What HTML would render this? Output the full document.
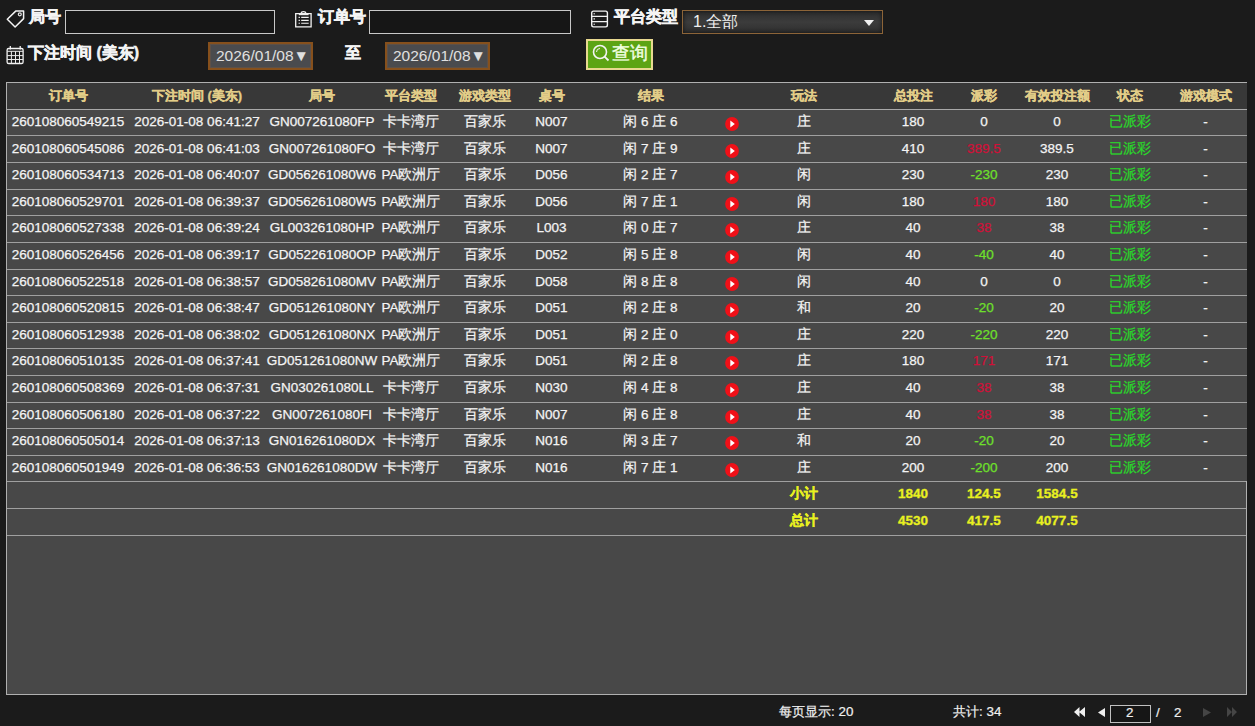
<!DOCTYPE html>
<html><head><meta charset="utf-8">
<style>
*{margin:0;padding:0;box-sizing:border-box}
html,body{width:1255px;height:726px;overflow:hidden;background:#1b1b1b;font-family:"Liberation Sans",sans-serif;color:#f0f0f0}
.a{position:absolute}
.lbl{position:absolute;font-weight:bold;font-size:16px;color:#f4f4f4;white-space:nowrap;line-height:16px;-webkit-text-stroke:0.5px #f4f4f4}
.inp{position:absolute;border:1px solid #c8c8c8;background:#161616}
.dt{position:absolute;border:2px solid #86501c;background:#4a4b4e;box-shadow:inset 0 0 0 1px #5c5048;color:#e0e0e0;font-size:15.5px;line-height:24px;white-space:nowrap}
.tbl{position:absolute;left:6px;top:82px;width:1241px;height:613px;background:#484848;border:1px solid #b0b0b0;border-right:none}
.rb{position:absolute;left:1246px;top:481px;width:1px;height:214px;background:#b0b0b0}
.hd{position:absolute;left:0;top:0;width:1240px;height:27px;background:#383838;border-bottom:1px solid #a8a8a8}
.hd .c{color:#e2cd88;font-weight:bold;font-size:13px;line-height:25px;-webkit-text-stroke:0.3px #e2cd88}
.rw{position:absolute;left:0;width:1240px;height:26.6px;border-bottom:1px solid #a0a0a0}
.c{position:absolute;top:0;width:140px;text-align:center;white-space:nowrap;font-size:13.5px;line-height:24px;color:#f4f4f4;-webkit-text-stroke:0.25px currentColor}
.ic{position:absolute;top:6px;width:16px;height:16px}
.ic svg{display:block}
.red{color:#d01038}
.grn{color:#6ee02a}
.st{color:#2ad82a}
.sm .c{color:#e8f020;font-weight:bold;-webkit-text-stroke:0.3px #e8f020}
.pg{position:absolute;font-size:13.4px;color:#f0f0f0;white-space:nowrap;line-height:14px;-webkit-text-stroke:0.2px #f0f0f0}
</style></head><body>
<!-- row 1 -->
<svg class="a" style="left:6px;top:10px" width="19" height="18" viewBox="0 0 19 18"><path d="M1.3 9.3 L9.7 1.1 L17.6 1.1 L17.6 8.6 L9.1 17 Z" fill="none" stroke="#f4f4f4" stroke-width="1.5" stroke-linejoin="round"/><circle cx="13.8" cy="4.3" r="1.5" fill="none" stroke="#e8e8e8" stroke-width="1.2"/></svg>
<div class="lbl" style="left:29px;top:9px">局号</div>
<div class="inp" style="left:65px;top:10px;width:210px;height:24px"></div>
<svg class="a" style="left:288px;top:5px" width="30" height="30" viewBox="0 0 30 30"><path d="M7.7 8.7H23.1V21.9H7.7Z" fill="none" stroke="#f2f2f2" stroke-width="1.3"/><path d="M10.8 9.6H20.6" stroke="#f2f2f2" stroke-width="1.2"/><path d="M13.2 8.4C13.4 6 17.6 6 17.8 8.4" fill="none" stroke="#f2f2f2" stroke-width="1.3"/><path d="M13.2 12.4H20.7M13.2 15.4H20.7M13.2 18.2H20.7M10.6 12.4H11.9M10.6 15.4H11.9M10.6 18.2H11.9" stroke="#f2f2f2" stroke-width="1.1"/></svg>
<div class="lbl" style="left:318px;top:9px">订单号</div>
<div class="inp" style="left:369px;top:10px;width:202px;height:24px"></div>
<svg class="a" style="left:585px;top:5px" width="30" height="30" viewBox="0 0 30 30"><rect x="6.7" y="6.1" width="15.7" height="15.8" rx="1.8" fill="none" stroke="#f2f2f2" stroke-width="1.4"/><path d="M6.7 11.3H22.4M6.7 16.6H22.4" stroke="#f2f2f2" stroke-width="1.3"/><circle cx="9.2" cy="8.7" r=".8" fill="#cfcfcf"/><circle cx="9.2" cy="13.9" r=".8" fill="#cfcfcf"/><circle cx="9.2" cy="19.2" r=".8" fill="#cfcfcf"/></svg>
<div class="lbl" style="left:614px;top:9px">平台类型</div>
<div class="a" style="left:682px;top:10px;width:201px;height:24px;border:1px solid #8c6438;background:linear-gradient(#2c2c2c,#3c3c3c 50%,#2e2e2e);box-shadow:inset 0 0 4px #111"></div>
<div class="a" style="left:693px;top:12px;font-size:16px;line-height:20px;color:#f0f0f0;white-space:nowrap">1.全部</div>
<svg class="a" style="left:864px;top:20px" width="10" height="6" viewBox="0 0 10 6"><path d="M0 0h10L5 6z" fill="#f0f0f0"/></svg>
<!-- row 2 -->
<svg class="a" style="left:0px;top:40px" width="30" height="30" viewBox="0 0 30 30"><rect x="7.1" y="8.5" width="16" height="15" rx="1.6" fill="none" stroke="#f2f2f2" stroke-width="1.3"/><path d="M10.3 6V9.6M20.2 6V9.6" stroke="#f2f2f2" stroke-width="1.3"/><path d="M7.1 11.3H23.1M11.4 11.3V23.5M15.5 11.3V23.5M19.5 11.3V23.5M7.1 15.6H23.1M7.1 19.5H23.1" stroke="#eaeaea" stroke-width="1"/></svg>
<div class="lbl" style="left:28px;top:45px">下注时间 (美东)</div>
<div class="dt" style="left:208px;top:42px;width:105px;height:28px;padding-left:6px">2026/01/08▼</div>
<div class="lbl" style="left:345px;top:45px">至</div>
<div class="dt" style="left:385px;top:42px;width:105px;height:28px;padding-left:6px">2026/01/08▼</div>
<div class="a" style="left:586px;top:39px;width:67px;height:31px;background:#5ca414;border:2px solid #e8d890"></div>
<svg class="a" style="left:592px;top:44px" width="18" height="18" viewBox="0 0 18 18"><circle cx="8" cy="8" r="6.5" fill="none" stroke="#f4f4f4" stroke-width="1.6"/><path d="M12.6 12.6L16.5 16.5" stroke="#f4f4f4" stroke-width="1.8"/><path d="M4.5 8a3.5 3.5 0 0 1 3.5-3.5" fill="none" stroke="#f4f4f4" stroke-width="1"/></svg>
<div class="a" style="left:612px;top:43px;font-size:18px;line-height:20px;color:#f0ffe0;white-space:nowrap;-webkit-text-stroke:0.4px #f0ffe0">查询</div>
<!-- table -->
<div class="tbl">
<div class="hd"><div class="c" style="left:-9.0px">订单号</div><div class="c" style="left:120.0px">下注时间 (美东)</div><div class="c" style="left:245.0px">局号</div><div class="c" style="left:334.0px">平台类型</div><div class="c" style="left:408.0px">游戏类型</div><div class="c" style="left:474.5px">桌号</div><div class="c" style="left:573.5px">结果</div><div class="c" style="left:727.0px">玩法</div><div class="c" style="left:836.0px">总投注</div><div class="c" style="left:907.0px">派彩</div><div class="c" style="left:980.0px">有效投注额</div><div class="c" style="left:1052.5px">状态</div><div class="c" style="left:1128.5px">游戏模式</div></div>
<div class="rw" style="top:27.00px;height:26px"><div class="c" style="left:-9.0px">260108060549215</div><div class="c" style="left:120.0px">2026-01-08 06:41:27</div><div class="c" style="left:245.0px">GN007261080FP</div><div class="c" style="left:334.0px">卡卡湾厅</div><div class="c" style="left:408.0px">百家乐</div><div class="c" style="left:474.5px">N007</div><div class="c" style="left:573.5px">闲 6 庄 6</div><div class="ic" style="left:717px"><svg width="16" height="16" viewBox="0 0 16 16"><circle cx="8" cy="8" r="6.9" fill="#f01018"/><path d="M6.3 4.6 L10.8 8.1 L6.3 11.6 Z" fill="#fff"/></svg></div><div class="c" style="left:727.0px">庄</div><div class="c" style="left:836.0px">180</div><div class="c" style="left:907.0px">0</div><div class="c" style="left:980.0px">0</div><div class="c grn st" style="left:1052.5px">已派彩</div><div class="c" style="left:1128.5px">-</div></div>
<div class="rw" style="top:53.60px"><div class="c" style="left:-9.0px">260108060545086</div><div class="c" style="left:120.0px">2026-01-08 06:41:03</div><div class="c" style="left:245.0px">GN007261080FO</div><div class="c" style="left:334.0px">卡卡湾厅</div><div class="c" style="left:408.0px">百家乐</div><div class="c" style="left:474.5px">N007</div><div class="c" style="left:573.5px">闲 7 庄 9</div><div class="ic" style="left:717px"><svg width="16" height="16" viewBox="0 0 16 16"><circle cx="8" cy="8" r="6.9" fill="#f01018"/><path d="M6.3 4.6 L10.8 8.1 L6.3 11.6 Z" fill="#fff"/></svg></div><div class="c" style="left:727.0px">庄</div><div class="c" style="left:836.0px">410</div><div class="c red" style="left:907.0px">389.5</div><div class="c" style="left:980.0px">389.5</div><div class="c grn st" style="left:1052.5px">已派彩</div><div class="c" style="left:1128.5px">-</div></div>
<div class="rw" style="top:80.20px"><div class="c" style="left:-9.0px">260108060534713</div><div class="c" style="left:120.0px">2026-01-08 06:40:07</div><div class="c" style="left:245.0px">GD056261080W6</div><div class="c" style="left:334.0px">PA欧洲厅</div><div class="c" style="left:408.0px">百家乐</div><div class="c" style="left:474.5px">D056</div><div class="c" style="left:573.5px">闲 2 庄 7</div><div class="ic" style="left:717px"><svg width="16" height="16" viewBox="0 0 16 16"><circle cx="8" cy="8" r="6.9" fill="#f01018"/><path d="M6.3 4.6 L10.8 8.1 L6.3 11.6 Z" fill="#fff"/></svg></div><div class="c" style="left:727.0px">闲</div><div class="c" style="left:836.0px">230</div><div class="c grn" style="left:907.0px">-230</div><div class="c" style="left:980.0px">230</div><div class="c grn st" style="left:1052.5px">已派彩</div><div class="c" style="left:1128.5px">-</div></div>
<div class="rw" style="top:106.80px"><div class="c" style="left:-9.0px">260108060529701</div><div class="c" style="left:120.0px">2026-01-08 06:39:37</div><div class="c" style="left:245.0px">GD056261080W5</div><div class="c" style="left:334.0px">PA欧洲厅</div><div class="c" style="left:408.0px">百家乐</div><div class="c" style="left:474.5px">D056</div><div class="c" style="left:573.5px">闲 7 庄 1</div><div class="ic" style="left:717px"><svg width="16" height="16" viewBox="0 0 16 16"><circle cx="8" cy="8" r="6.9" fill="#f01018"/><path d="M6.3 4.6 L10.8 8.1 L6.3 11.6 Z" fill="#fff"/></svg></div><div class="c" style="left:727.0px">闲</div><div class="c" style="left:836.0px">180</div><div class="c red" style="left:907.0px">180</div><div class="c" style="left:980.0px">180</div><div class="c grn st" style="left:1052.5px">已派彩</div><div class="c" style="left:1128.5px">-</div></div>
<div class="rw" style="top:133.40px"><div class="c" style="left:-9.0px">260108060527338</div><div class="c" style="left:120.0px">2026-01-08 06:39:24</div><div class="c" style="left:245.0px">GL003261080HP</div><div class="c" style="left:334.0px">PA欧洲厅</div><div class="c" style="left:408.0px">百家乐</div><div class="c" style="left:474.5px">L003</div><div class="c" style="left:573.5px">闲 0 庄 7</div><div class="ic" style="left:717px"><svg width="16" height="16" viewBox="0 0 16 16"><circle cx="8" cy="8" r="6.9" fill="#f01018"/><path d="M6.3 4.6 L10.8 8.1 L6.3 11.6 Z" fill="#fff"/></svg></div><div class="c" style="left:727.0px">庄</div><div class="c" style="left:836.0px">40</div><div class="c red" style="left:907.0px">38</div><div class="c" style="left:980.0px">38</div><div class="c grn st" style="left:1052.5px">已派彩</div><div class="c" style="left:1128.5px">-</div></div>
<div class="rw" style="top:160.00px"><div class="c" style="left:-9.0px">260108060526456</div><div class="c" style="left:120.0px">2026-01-08 06:39:17</div><div class="c" style="left:245.0px">GD052261080OP</div><div class="c" style="left:334.0px">PA欧洲厅</div><div class="c" style="left:408.0px">百家乐</div><div class="c" style="left:474.5px">D052</div><div class="c" style="left:573.5px">闲 5 庄 8</div><div class="ic" style="left:717px"><svg width="16" height="16" viewBox="0 0 16 16"><circle cx="8" cy="8" r="6.9" fill="#f01018"/><path d="M6.3 4.6 L10.8 8.1 L6.3 11.6 Z" fill="#fff"/></svg></div><div class="c" style="left:727.0px">闲</div><div class="c" style="left:836.0px">40</div><div class="c grn" style="left:907.0px">-40</div><div class="c" style="left:980.0px">40</div><div class="c grn st" style="left:1052.5px">已派彩</div><div class="c" style="left:1128.5px">-</div></div>
<div class="rw" style="top:186.60px"><div class="c" style="left:-9.0px">260108060522518</div><div class="c" style="left:120.0px">2026-01-08 06:38:57</div><div class="c" style="left:245.0px">GD058261080MV</div><div class="c" style="left:334.0px">PA欧洲厅</div><div class="c" style="left:408.0px">百家乐</div><div class="c" style="left:474.5px">D058</div><div class="c" style="left:573.5px">闲 8 庄 8</div><div class="ic" style="left:717px"><svg width="16" height="16" viewBox="0 0 16 16"><circle cx="8" cy="8" r="6.9" fill="#f01018"/><path d="M6.3 4.6 L10.8 8.1 L6.3 11.6 Z" fill="#fff"/></svg></div><div class="c" style="left:727.0px">闲</div><div class="c" style="left:836.0px">40</div><div class="c" style="left:907.0px">0</div><div class="c" style="left:980.0px">0</div><div class="c grn st" style="left:1052.5px">已派彩</div><div class="c" style="left:1128.5px">-</div></div>
<div class="rw" style="top:213.20px"><div class="c" style="left:-9.0px">260108060520815</div><div class="c" style="left:120.0px">2026-01-08 06:38:47</div><div class="c" style="left:245.0px">GD051261080NY</div><div class="c" style="left:334.0px">PA欧洲厅</div><div class="c" style="left:408.0px">百家乐</div><div class="c" style="left:474.5px">D051</div><div class="c" style="left:573.5px">闲 2 庄 8</div><div class="ic" style="left:717px"><svg width="16" height="16" viewBox="0 0 16 16"><circle cx="8" cy="8" r="6.9" fill="#f01018"/><path d="M6.3 4.6 L10.8 8.1 L6.3 11.6 Z" fill="#fff"/></svg></div><div class="c" style="left:727.0px">和</div><div class="c" style="left:836.0px">20</div><div class="c grn" style="left:907.0px">-20</div><div class="c" style="left:980.0px">20</div><div class="c grn st" style="left:1052.5px">已派彩</div><div class="c" style="left:1128.5px">-</div></div>
<div class="rw" style="top:239.80px"><div class="c" style="left:-9.0px">260108060512938</div><div class="c" style="left:120.0px">2026-01-08 06:38:02</div><div class="c" style="left:245.0px">GD051261080NX</div><div class="c" style="left:334.0px">PA欧洲厅</div><div class="c" style="left:408.0px">百家乐</div><div class="c" style="left:474.5px">D051</div><div class="c" style="left:573.5px">闲 2 庄 0</div><div class="ic" style="left:717px"><svg width="16" height="16" viewBox="0 0 16 16"><circle cx="8" cy="8" r="6.9" fill="#f01018"/><path d="M6.3 4.6 L10.8 8.1 L6.3 11.6 Z" fill="#fff"/></svg></div><div class="c" style="left:727.0px">庄</div><div class="c" style="left:836.0px">220</div><div class="c grn" style="left:907.0px">-220</div><div class="c" style="left:980.0px">220</div><div class="c grn st" style="left:1052.5px">已派彩</div><div class="c" style="left:1128.5px">-</div></div>
<div class="rw" style="top:266.40px"><div class="c" style="left:-9.0px">260108060510135</div><div class="c" style="left:120.0px">2026-01-08 06:37:41</div><div class="c" style="left:245.0px">GD051261080NW</div><div class="c" style="left:334.0px">PA欧洲厅</div><div class="c" style="left:408.0px">百家乐</div><div class="c" style="left:474.5px">D051</div><div class="c" style="left:573.5px">闲 2 庄 8</div><div class="ic" style="left:717px"><svg width="16" height="16" viewBox="0 0 16 16"><circle cx="8" cy="8" r="6.9" fill="#f01018"/><path d="M6.3 4.6 L10.8 8.1 L6.3 11.6 Z" fill="#fff"/></svg></div><div class="c" style="left:727.0px">庄</div><div class="c" style="left:836.0px">180</div><div class="c red" style="left:907.0px">171</div><div class="c" style="left:980.0px">171</div><div class="c grn st" style="left:1052.5px">已派彩</div><div class="c" style="left:1128.5px">-</div></div>
<div class="rw" style="top:293.00px"><div class="c" style="left:-9.0px">260108060508369</div><div class="c" style="left:120.0px">2026-01-08 06:37:31</div><div class="c" style="left:245.0px">GN030261080LL</div><div class="c" style="left:334.0px">卡卡湾厅</div><div class="c" style="left:408.0px">百家乐</div><div class="c" style="left:474.5px">N030</div><div class="c" style="left:573.5px">闲 4 庄 8</div><div class="ic" style="left:717px"><svg width="16" height="16" viewBox="0 0 16 16"><circle cx="8" cy="8" r="6.9" fill="#f01018"/><path d="M6.3 4.6 L10.8 8.1 L6.3 11.6 Z" fill="#fff"/></svg></div><div class="c" style="left:727.0px">庄</div><div class="c" style="left:836.0px">40</div><div class="c red" style="left:907.0px">38</div><div class="c" style="left:980.0px">38</div><div class="c grn st" style="left:1052.5px">已派彩</div><div class="c" style="left:1128.5px">-</div></div>
<div class="rw" style="top:319.60px"><div class="c" style="left:-9.0px">260108060506180</div><div class="c" style="left:120.0px">2026-01-08 06:37:22</div><div class="c" style="left:245.0px">GN007261080FI</div><div class="c" style="left:334.0px">卡卡湾厅</div><div class="c" style="left:408.0px">百家乐</div><div class="c" style="left:474.5px">N007</div><div class="c" style="left:573.5px">闲 6 庄 8</div><div class="ic" style="left:717px"><svg width="16" height="16" viewBox="0 0 16 16"><circle cx="8" cy="8" r="6.9" fill="#f01018"/><path d="M6.3 4.6 L10.8 8.1 L6.3 11.6 Z" fill="#fff"/></svg></div><div class="c" style="left:727.0px">庄</div><div class="c" style="left:836.0px">40</div><div class="c red" style="left:907.0px">38</div><div class="c" style="left:980.0px">38</div><div class="c grn st" style="left:1052.5px">已派彩</div><div class="c" style="left:1128.5px">-</div></div>
<div class="rw" style="top:346.20px"><div class="c" style="left:-9.0px">260108060505014</div><div class="c" style="left:120.0px">2026-01-08 06:37:13</div><div class="c" style="left:245.0px">GN016261080DX</div><div class="c" style="left:334.0px">卡卡湾厅</div><div class="c" style="left:408.0px">百家乐</div><div class="c" style="left:474.5px">N016</div><div class="c" style="left:573.5px">闲 3 庄 7</div><div class="ic" style="left:717px"><svg width="16" height="16" viewBox="0 0 16 16"><circle cx="8" cy="8" r="6.9" fill="#f01018"/><path d="M6.3 4.6 L10.8 8.1 L6.3 11.6 Z" fill="#fff"/></svg></div><div class="c" style="left:727.0px">和</div><div class="c" style="left:836.0px">20</div><div class="c grn" style="left:907.0px">-20</div><div class="c" style="left:980.0px">20</div><div class="c grn st" style="left:1052.5px">已派彩</div><div class="c" style="left:1128.5px">-</div></div>
<div class="rw" style="top:372.80px"><div class="c" style="left:-9.0px">260108060501949</div><div class="c" style="left:120.0px">2026-01-08 06:36:53</div><div class="c" style="left:245.0px">GN016261080DW</div><div class="c" style="left:334.0px">卡卡湾厅</div><div class="c" style="left:408.0px">百家乐</div><div class="c" style="left:474.5px">N016</div><div class="c" style="left:573.5px">闲 7 庄 1</div><div class="ic" style="left:717px"><svg width="16" height="16" viewBox="0 0 16 16"><circle cx="8" cy="8" r="6.9" fill="#f01018"/><path d="M6.3 4.6 L10.8 8.1 L6.3 11.6 Z" fill="#fff"/></svg></div><div class="c" style="left:727.0px">庄</div><div class="c" style="left:836.0px">200</div><div class="c grn" style="left:907.0px">-200</div><div class="c" style="left:980.0px">200</div><div class="c grn st" style="left:1052.5px">已派彩</div><div class="c" style="left:1128.5px">-</div></div>
<div class="rw sm" style="top:399.40px"><div class="c" style="left:727.0px">小计</div><div class="c" style="left:836.0px">1840</div><div class="c" style="left:907.0px">124.5</div><div class="c" style="left:980.0px">1584.5</div></div>
<div class="rw sm" style="top:426.00px"><div class="c" style="left:727.0px">总计</div><div class="c" style="left:836.0px">4530</div><div class="c" style="left:907.0px">417.5</div><div class="c" style="left:980.0px">4077.5</div></div>
</div>
<div class="rb"></div>
<!-- pagination -->
<div class="pg" style="left:779px;top:705px">每页显示: 20</div>
<div class="pg" style="left:953px;top:705px">共计: 34</div>
<svg class="a" style="left:1074px;top:707px" width="11" height="10" viewBox="0 0 11 10"><path d="M0 5L5.5 0V10Z M5 5L11 0V10Z" fill="#f0f0f0"/></svg>
<svg class="a" style="left:1098px;top:708px" width="7" height="9" viewBox="0 0 7 9"><path d="M0 4.5L7 0V9Z" fill="#f0f0f0"/></svg>
<div class="inp" style="left:1110px;top:705px;width:41px;height:18px;background:#161616;border-color:#c0c0c0"></div>
<div class="pg" style="left:1126px;top:706px">2</div>
<div class="pg" style="left:1156px;top:706px">/</div>
<div class="pg" style="left:1174px;top:706px">2</div>
<svg class="a" style="left:1203px;top:708px" width="8" height="9" viewBox="0 0 8 9"><path d="M8 4.5L0 0V9Z" fill="#454545"/></svg>
<svg class="a" style="left:1227px;top:707px" width="10" height="10" viewBox="0 0 10 10"><path d="M10 5L5 0V10Z M5 5L0 0V10Z" fill="#454545"/></svg>
</body></html>
